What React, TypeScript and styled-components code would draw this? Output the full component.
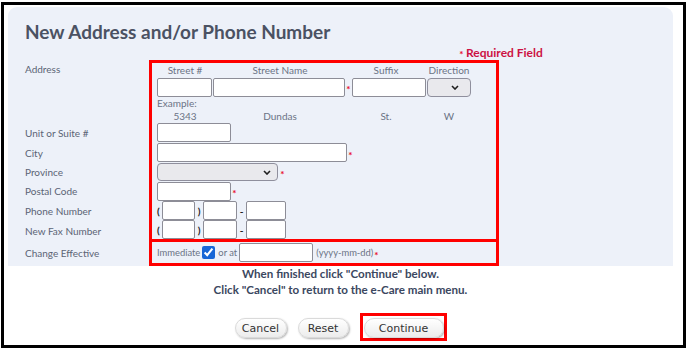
import React from 'react'
import styled, { createGlobalStyle } from 'styled-components'

//CSS
const GlobalStyle = createGlobalStyle`
    html, body {
        margin: 0;
        padding: 0;
        background: #ffffff;
    }
    body {
        font-family: Lato, "Open Sans", sans-serif;
        overflow: hidden;
    }
`
const Frame = styled.div`
    box-sizing: border-box;
    width: 685px;
    height: 346px;
    margin: 2px 0 0 1px;
    border: 3px solid #000000;
`
const Panel = styled.section`
    box-sizing: border-box;
    width: 665px;
    height: 259px;
    margin: 2px 0 0 4px;
    padding: 13px 0 0 17px;
    background: #edf1f9;
    border-radius: 9px 9px 0 0;
`
const Title = styled.h1`
    margin: 0;
    font-size: 19px;
    line-height: 24px;
    font-weight: 700;
    color: #4b5263;
`
const RequiredNote = styled.div`
    height: 16px;
    margin-left: 432px;
    display: flex;
    align-items: center;
    font-size: 12px;
    font-weight: 700;
    color: #cc1143;
    white-space: nowrap;
`
const Row = styled.div<{ $h: number }>`
    display: flex;
    height: ${p => p.$h}px;
`
const Label = styled.div<{ $pb?: number }>`
    box-sizing: border-box;
    width: 124px;
    flex: none;
    display: flex;
    align-items: center;
    padding-bottom: ${p => p.$pb || 0}px;
    font-size: 10px;
    color: #5b6475;
`
const Field = styled.div<{ $top?: boolean, $bottom?: boolean, $size?: number }>`
    box-sizing: border-box;
    width: 350px;
    border: 3px solid #ff0000;
    border-top-width: ${p => p.$top ? 3 : 0}px;
    border-bottom-width: ${p => p.$bottom ? 3 : 0}px;
    padding-left: 5px;
    display: flex;
    align-items: center;
    font-size: ${p => p.$size || 10}px;
    color: #6b7385;
    white-space: nowrap;
`
const Columns = styled.div`
    display: grid;
    grid-template-columns: 56px 134px 78px 48px;
    text-align: center;
    line-height: 12px;
`
const Group = styled.div<{ $gap?: number }>`
    display: flex;
    align-items: center;
    gap: ${p => p.$gap || 0}px;
`
const TextBox = styled.input<{ $w: number, $h?: number }>`
    box-sizing: border-box;
    width: ${p => p.$w}px;
    height: ${p => p.$h || 19}px;
    margin: 0;
    padding: 0 3px;
    border: 1px solid #8d8d97;
    border-radius: 2px;
    background: #ffffff;
    flex: none;
`
const DateBox = styled(TextBox)`
    margin: 0 3px 0 2px;
`
const SelectWrap = styled.span<{ $w: number, $h: number }>`
    position: relative;
    display: inline-block;
    width: ${p => p.$w}px;
    height: ${p => p.$h}px;
    flex: none;
`
const Select = styled.select`
    box-sizing: border-box;
    appearance: none;
    width: 100%;
    height: 100%;
    margin: 0;
    border: 1px solid #8f8f9d;
    border-radius: 4px;
    background: #e9e9ed;
`
const Chevron = styled.svg<{ $right: number }>`
    position: absolute;
    top: 50%;
    right: ${p => p.$right}px;
    margin-top: -2px;
    pointer-events: none;
`
const Star = styled.span<{ $w?: number }>`
    width: ${p => p.$w || 7}px;
    flex: none;
    padding-top: 4px;
    text-align: center;
    font-size: 10px;
    line-height: 1;
    font-weight: 700;
    color: #e8102a;
`
const Paren = styled.span<{ $w: number, $align?: string }>`
    width: ${p => p.$w}px;
    flex: none;
    text-align: ${p => p.$align || 'center'};
    font-weight: 700;
    color: #222222;
`
const Check = styled.input`
    width: 13px;
    height: 13px;
    margin: 0 3px 0 2px;
    accent-color: #1766d6;
`
const Notes = styled.div`
    width: 665px;
    margin: 0 0 0 4px;
    text-align: center;
    font-size: 11.6px;
    line-height: 16px;
    font-weight: 700;
    color: #3b4760;
`
const Buttons = styled.div`
    width: 665px;
    margin: 15px 0 0 4px;
    display: flex;
    justify-content: center;
    align-items: flex-start;
    gap: 11px;
`
const Button = styled.button<{ $w: number }>`
    display: block;
    width: ${p => p.$w}px;
    height: 20px;
    margin-top: 5px;
    padding: 0;
    font-family: "DejaVu Sans", Verdana, sans-serif;
    font-size: 11px;
    color: #333333;
    background: linear-gradient(#ffffff, #ececec);
    border: 1px solid #dadada;
    border-radius: 10px;
    box-shadow: 1px 1px 2px rgba(0, 0, 0, 0.3);
`
const Highlight = styled.div`
    display: flex;
    padding: 2px 0 0 1px;
    border: 3px solid #ff0000;
    & > button {
        margin-top: 0;
    }
`

const ArrowDown: React.FC<{ right: number }> = ({ right }) => (
    <Chevron $right={right} width="8" height="5" viewBox="0 0 8 5">
        <path d="M1 1 L4 4 L7 1" fill="none" stroke="#1f1f1f" strokeWidth="1.6" />
    </Chevron>
)

const App: React.FC = () => {
    return (
        <Frame>
            <GlobalStyle />
            <Panel>
                <Title>New Address and/or Phone Number</Title>
                <RequiredNote><Star $w={9}>*</Star>Required Field</RequiredNote>

                <Row $h={17}>
                    <Label>Address</Label>
                    <Field $top>
                        <Columns>
                            <span>Street #</span>
                            <span>Street Name</span>
                            <span>Suffix</span>
                            <span>Direction</span>
                        </Columns>
                    </Field>
                </Row>
                <Row $h={20}>
                    <Label />
                    <Field>
                        <Group $gap={1}>
                            <TextBox $w={55} />
                            <TextBox $w={132} />
                            <Star $w={5}>*</Star>
                            <TextBox $w={74} />
                            <SelectWrap $w={44} $h={19}>
                                <Select />
                                <ArrowDown right={12} />
                            </SelectWrap>
                        </Group>
                    </Field>
                </Row>
                <Row $h={12}>
                    <Label />
                    <Field>Example:</Field>
                </Row>
                <Row $h={13}>
                    <Label />
                    <Field>
                        <Columns>
                            <span>5343</span>
                            <span>Dundas</span>
                            <span>St.</span>
                            <span>W</span>
                        </Columns>
                    </Field>
                </Row>
                <Row $h={21}>
                    <Label>Unit or Suite #</Label>
                    <Field><TextBox $w={74} /></Field>
                </Row>
                <Row $h={19}>
                    <Label>City</Label>
                    <Field>
                        <TextBox $w={190} />
                        <Star>*</Star>
                    </Field>
                </Row>
                <Row $h={19}>
                    <Label>Province</Label>
                    <Field>
                        <SelectWrap $w={121} $h={18}>
                            <Select />
                            <ArrowDown right={7} />
                        </SelectWrap>
                        <Star $w={9}>*</Star>
                    </Field>
                </Row>
                <Row $h={20}>
                    <Label>Postal Code</Label>
                    <Field>
                        <TextBox $w={74} />
                        <Star>*</Star>
                    </Field>
                </Row>
                <Row $h={19}>
                    <Label>Phone Number</Label>
                    <Field>
                        <Paren $w={5} $align="left">(</Paren>
                        <TextBox $w={33} />
                        <Paren $w={8}>)</Paren>
                        <TextBox $w={34} />
                        <Paren $w={9}>-</Paren>
                        <TextBox $w={40} />
                    </Field>
                </Row>
                <Row $h={22}>
                    <Label>New Fax Number</Label>
                    <Field $bottom>
                        <Paren $w={5} $align="left">(</Paren>
                        <TextBox $w={33} />
                        <Paren $w={8}>)</Paren>
                        <TextBox $w={34} />
                        <Paren $w={9}>-</Paren>
                        <TextBox $w={40} />
                    </Field>
                </Row>
                <Row $h={24}>
                    <Label $pb={3}>Change Effective</Label>
                    <Field $bottom $size={9.4}>
                        Immediate
                        <Check type="checkbox" defaultChecked />
                        or at
                        <DateBox $w={74} />
                        (yyyy-mm-dd)
                        <Star $w={6}>*</Star>
                    </Field>
                </Row>
            </Panel>

            <Notes>
                When finished click "Continue" below.<br />
                Click "Cancel" to return to the e-Care main menu.
            </Notes>
            <Buttons>
                <Button $w={52}>Cancel</Button>
                <Button $w={51}>Reset</Button>
                <Highlight>
                    <Button $w={80}>Continue</Button>
                </Highlight>
            </Buttons>
        </Frame>
    )
}
export default App
